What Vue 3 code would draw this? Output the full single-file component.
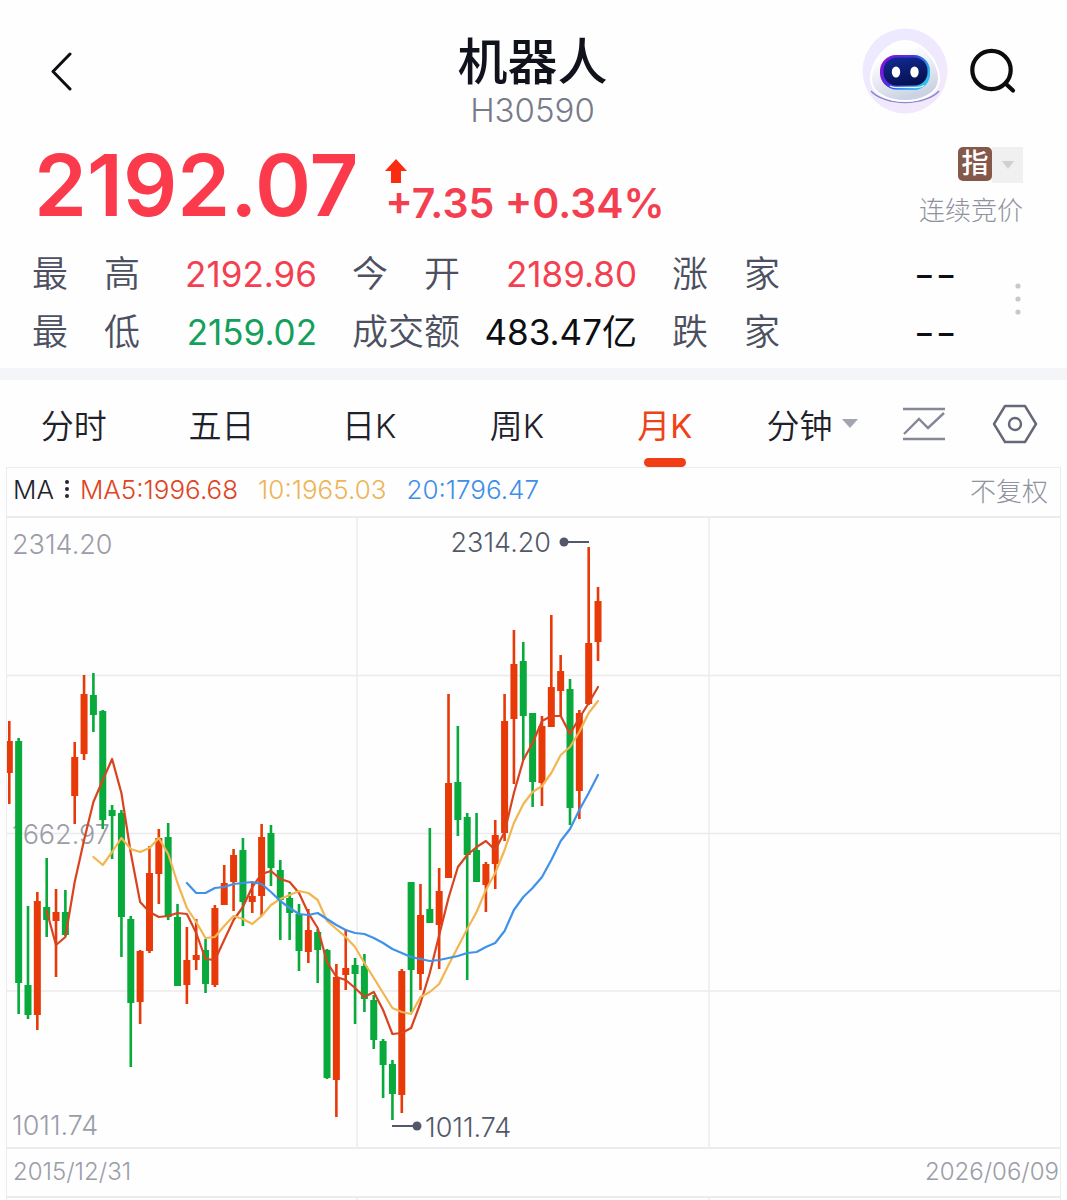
<script setup>
import { ref } from 'vue'

const tabs = ['分时', '五日', '日K', '周K', '月K']
const active = ref('月K')

const quotes = [
  [
    { label: '最高', value: '2192.96', tone: 'up' },
    { label: '今开', value: '2189.80', tone: 'up' },
    { label: '涨家', value: '--', tone: 'none' },
  ],
  [
    { label: '最低', value: '2159.02', tone: 'down' },
    { label: '成交额', value: '483.47亿', tone: 'flat' },
    { label: '跌家', value: '--', tone: 'none' },
  ],
]

// Monthly candles: [rising, high, body top, body bottom, low]
const candles = [
  [1, 721, 741, 773, 804], [0, 738, 741, 983, 1014], [0, 906, 985, 1015, 1019], [1, 892, 901, 1015, 1030],
  [0, 858, 907, 920, 937], [1, 889, 912, 921, 977], [0, 890, 912, 935, 936], [1, 742, 757, 796, 824],
  [1, 675, 694, 754, 760], [0, 673, 695, 715, 732], [0, 710, 711, 820, 829], [0, 805, 810, 816, 859],
  [0, 810, 813, 917, 957], [0, 916, 919, 1003, 1067], [1, 950, 951, 1002, 1024], [1, 846, 873, 951, 953],
  [1, 829, 838, 874, 904], [0, 823, 837, 917, 920], [0, 904, 917, 986, 986], [1, 927, 960, 985, 1004],
  [1, 919, 955, 960, 970], [0, 939, 950, 984, 993], [1, 905, 908, 985, 987], [1, 865, 883, 905, 905],
  [1, 849, 855, 882, 911], [0, 838, 850, 902, 926], [1, 883, 896, 902, 913], [1, 824, 837, 896, 916],
  [0, 825, 833, 868, 886], [0, 860, 870, 900, 940], [0, 892, 898, 913, 940], [0, 904, 914, 951, 971],
  [1, 909, 930, 952, 963], [0, 929, 932, 950, 983], [0, 949, 950, 1078, 1079], [1, 964, 977, 1080, 1117],
  [1, 929, 968, 975, 990], [0, 958, 965, 974, 1024], [0, 954, 966, 999, 1012], [0, 995, 1000, 1040, 1049],
  [0, 1039, 1041, 1065, 1098], [0, 1060, 1064, 1094, 1120], [1, 969, 971, 1095, 1113], [0, 882, 882, 970, 1012],
  [1, 884, 915, 974, 990], [0, 828, 909, 923, 923], [1, 868, 891, 925, 969], [1, 694, 783, 878, 878],
  [0, 726, 782, 820, 836], [0, 813, 817, 855, 980], [0, 813, 850, 882, 882], [1, 862, 864, 885, 912],
  [1, 820, 835, 864, 889], [1, 694, 721, 833, 841], [1, 630, 664, 719, 784], [0, 642, 661, 716, 760],
  [0, 713, 713, 782, 807], [1, 716, 726, 783, 806], [1, 615, 687, 727, 727], [1, 655, 671, 691, 716],
  [0, 679, 689, 808, 825], [1, 710, 713, 791, 819], [1, 547, 643, 704, 705], [1, 587, 601, 642, 661],
]

const averages = [
  { name: 'ma5', start: 4, values: [911, 945, 937, 882, 840, 802, 780, 759, 793, 853, 902, 912, 917, 916, 913, 914, 933, 959, 960, 940, 920, 907, 887, 874, 871, 879, 882, 893, 913, 928, 962, 977, 980, 988, 997, 992, 1010, 1034, 1033, 1028, 1003, 973, 935, 898, 867, 855, 847, 841, 850, 832, 793, 760, 743, 721, 716, 716, 734, 718, 703, 687] },
  { name: 'ma10', start: 9, values: [857, 865, 852, 838, 849, 852, 848, 838, 854, 883, 908, 922, 938, 937, 926, 916, 919, 924, 916, 905, 899, 895, 891, 893, 900, 921, 929, 937, 947, 963, 978, 993, 1008, 1012, 1014, 997, 992, 984, 965, 947, 929, 912, 890, 873, 850, 823, 804, 792, 786, 773, 755, 747, 732, 713, 701] },
  { name: 'ma20', start: 19, values: [883, 893, 893, 888, 887, 884, 883, 882, 884, 892, 901, 908, 914, 915, 913, 919, 925, 930, 933, 934, 938, 943, 949, 953, 957, 959, 961, 960, 958, 956, 953, 952, 947, 943, 931, 910, 897, 888, 877, 860, 841, 829, 810, 793, 775] },
]

const cx = (i) => 9.3 + i * 9.345
const points = (line) => line.values.map((y, i) => `${cx(line.start + i).toFixed(1)},${y}`).join(' ')
</script>

<template>
  <main class="page">
    <header class="top">
      <button class="icon-btn back" aria-label="返回">
        <svg width="26" height="40" viewBox="0 0 26 40"><path d="M23 3 6 20.500 23 38" fill="none" stroke="#0d0e12" stroke-width="3" stroke-linecap="round" stroke-linejoin="round" /></svg>
      </button>
      <div class="heading">
        <h1>机器人</h1>
        <p>H30590</p>
      </div>
      <div class="actions">
        <button class="icon-btn" aria-label="助手">
          <svg width="86" height="86" viewBox="0 0 86 86">
            <defs>
              <linearGradient id="halo" x1="0" y1="0" x2="1" y2="1"><stop offset="0" stop-color="#eceaff" /><stop offset="1" stop-color="#f3e8fc" /></linearGradient>
              <linearGradient id="head" x1="0" y1="0" x2=".4" y2="1"><stop offset=".3" stop-color="#fff" /><stop offset="1" stop-color="#cbd3e3" /></linearGradient>
              <linearGradient id="rim" x1="0" y1=".2" x2="1" y2=".6"><stop offset="0" stop-color="#8a10d8" /><stop offset=".55" stop-color="#3b3fe0" /><stop offset="1" stop-color="#2cc3ef" /></linearGradient>
              <linearGradient id="visor" x1=".2" y1="0" x2=".6" y2="1"><stop offset="0" stop-color="#122a92" /><stop offset="1" stop-color="#06104f" /></linearGradient>
            </defs>
            <circle cx="43" cy="43" r="42.500" fill="url(#halo)" />
            <path d="M9 63C15 70 29 74.500 43 74.500s28-4.500 34-11.500" fill="none" stroke="#8c84cf" stroke-width="1.500" />
            <path d="M43 13c17 0 34 20 34 38 0 15-18 22-34 22S9 66 9 51c0-18 17-38 34-38Z" fill="url(#head)" stroke="#fff" stroke-width="2" />
            <rect x="19" y="28" width="49" height="34" rx="16" fill="#2cb8ee" />
            <rect x="18" y="27" width="50" height="34" rx="16" fill="url(#rim)" />
            <rect x="21.500" y="29.500" width="44" height="28" rx="13" fill="url(#visor)" />
            <path d="M28 58q3 2 8 1.500h18q5 0 8-2" fill="none" stroke="#dff4ff" stroke-width="1.500" />
            <ellipse cx="34" cy="44" rx="4.200" ry="5.500" fill="#fff" />
            <ellipse cx="52.500" cy="44" rx="4.200" ry="5.500" fill="#fff" />
          </svg>
        </button>
        <button class="icon-btn" aria-label="搜索">
          <svg width="50" height="50" viewBox="0 0 50 50" fill="none" stroke="#0b0c0e" stroke-width="4.200" stroke-linecap="round"><circle cx="23.500" cy="24" r="19.200" /><path d="m38 38 7 6.500" /></svg>
        </button>
      </div>
    </header>

    <section class="price">
      <strong class="last">2192.07</strong>
      <div class="change">
        <svg width="22" height="24" viewBox="0 0 22 24"><path d="M11 0 22 12h-6v12H6V12H0Z" fill="#fb2b12" /></svg>
        <span>+7.35 +0.34%</span>
      </div>
      <div class="status">
        <button class="kind" aria-label="指数类型">
          <b>指</b>
          <i><svg width="14" height="8" viewBox="0 0 14 8"><path d="M1 0h12L7 8Z" fill="#cfcfd6" /></svg></i>
        </button>
        <span>连续竞价</span>
      </div>
    </section>

    <section class="quotes">
      <dl>
        <template v-for="(row, r) in quotes" :key="r">
          <div v-for="q in row" :key="q.label">
            <dt><span v-for="c in q.label" :key="c">{{ c }}</span></dt>
            <dd :class="q.tone">{{ q.value }}</dd>
          </div>
        </template>
      </dl>
      <button class="icon-btn more" aria-label="更多">
        <svg width="6" height="34" viewBox="0 0 6 34" fill="#c9c9cc"><circle cx="3" cy="4" r="2.600" /><circle cx="3" cy="17" r="2.600" /><circle cx="3" cy="30" r="2.600" /></svg>
      </button>
    </section>

    <nav class="tabs">
      <button v-for="t in tabs" :key="t" :class="{ on: t === active }" @click="active = t">{{ t }}</button>
      <button class="minutes">分钟<svg width="16" height="9" viewBox="0 0 16 9"><path d="M0 0h16L8 9Z" fill="#a3a6b0" /></svg></button>
      <button aria-label="指标">
        <svg width="44" height="36" viewBox="0 0 44 36" fill="none" stroke="#858896" stroke-width="2.400"><path d="M1 3h42M1 33h42" /><path d="m2 28 15-15 9 9L42 7" /></svg>
      </button>
      <button aria-label="设置">
        <svg width="46" height="40" viewBox="0 0 46 40" fill="none" stroke="#656877" stroke-width="2.400" stroke-linejoin="round"><path d="M13 2h20l11 18-11 18H13L2 20Z" /><circle cx="23" cy="20" r="6" /></svg>
      </button>
    </nav>

    <section class="chart">
      <div class="legend">
        <span class="ma">MA</span>
        <svg width="6" height="20" viewBox="0 0 6 20" fill="#24262e"><circle cx="3" cy="3" r="2" /><circle cx="3" cy="10" r="2" /><circle cx="3" cy="17" r="2" /></svg>
        <span class="m5">MA5:1996.68</span>
        <span class="m10">10:1965.03</span>
        <span class="m20">20:1796.47</span>
        <span class="adjust">不复权</span>
      </div>
      <svg class="plot" viewBox="7 518 1053 629" role="img" aria-label="月K线">
        <path class="grid" d="M7 675.500H1060M7 833.500H1060M7 991H1060M357 518V1148M709 518V1148" />
        <g class="axis">
          <text x="12" y="554">2314.20</text>
          <text x="12" y="844">1662.97</text>
          <text x="12" y="1135">1011.74</text>
        </g>
        <g v-for="(c, i) in candles" :key="i" :class="c[0] ? 'rise' : 'fall'">
          <rect :x="cx(i) - 1.3" :y="c[1]" width="2.6" :height="c[4] - c[1]" />
          <rect :x="cx(i) - 3.5" :y="c[2]" width="7" :height="c[3] - c[2]" />
        </g>
        <polyline v-for="line in averages" :key="line.name" :class="line.name" :points="points(line)" />
        <g class="callout">
          <path d="M564 542h25M392 1126h25" />
          <circle cx="564" cy="542" r="4.500" />
          <circle cx="417" cy="1126" r="4.500" />
          <text x="551" y="552" text-anchor="end">2314.20</text>
          <text x="425" y="1137">1011.74</text>
        </g>
      </svg>
      <div class="dates"><time>2015/12/31</time><time>2026/06/09</time></div>
      <svg class="volume" viewBox="7 1198 1053 3"><path class="grid" d="M357 1198V1201M709 1198V1201" /></svg>
    </section>
  </main>
</template>

<style>
body { margin: 0; background: #fefefe; }
</style>

<style scoped>
.page {
  font-family: Inter, "Noto Sans CJK SC", sans-serif;
  color: #1f222b;
  background: #fefefe;
  overflow: hidden;
}
button { border: 0; padding: 0; margin: 0; background: none; font: inherit; color: inherit; cursor: pointer; }
svg { display: block; }
h1, p, dl, dd { margin: 0; }

.top { display: grid; grid-template-columns: 1fr auto 1fr; align-items: center; height: 142px; padding: 0 49px 0 47px; }
.heading { text-align: center; }
h1 { padding-top: 17px; font-size: 50px; line-height: 60px; font-weight: 500; color: #10131c; }
.heading p { font-size: 33px; line-height: 36px; font-weight: 300; color: #777b89; }
.actions { display: flex; justify-content: flex-end; align-items: center; gap: 20px; }

.price { display: flex; align-items: flex-start; height: 100px; padding: 0 44px 0 34px; }
.last { font-size: 85px; line-height: 88px; font-weight: 600; color: #fb3a4c; }
.change { display: flex; flex-direction: column; margin-left: 27px; padding-top: 17px; color: #f43f51; }
.change span { font-size: 41px; line-height: 40px; font-weight: 600; }
.status { display: flex; flex-direction: column; align-items: flex-end; gap: 10px; margin-left: auto; padding-top: 5px; font-size: 26px; line-height: 36px; font-weight: 300; color: #8f939f; }
.kind { display: flex; height: 36px; }
.kind b { width: 34px; height: 34px; border-radius: 5px; background: #85594a; color: #fff; font-size: 27px; line-height: 34px; font-weight: 500; }
.kind i { display: flex; align-items: center; justify-content: center; width: 31px; background: #f0f0f1; }

.quotes { display: flex; align-items: center; justify-content: space-between; padding: 3px 46px 7px 32px; border-bottom: 12px solid #f4f5f9; }
dl { display: grid; grid-template-columns: 285fr 285fr 285fr; column-gap: 35px; flex: 0 1 925px; }
dl div { display: flex; justify-content: space-between; align-items: center; height: 58px; font-size: 36px; line-height: 58px; }
dt { display: flex; justify-content: space-between; width: 108px; font-weight: 350; color: #4c5060; }
dd { font-size: 35px; font-weight: 400; white-space: nowrap; }
.more { padding-bottom: 8px; }
.up { color: #f43f51; }
.down { color: #14a05c; }
.flat { color: #0d0e12; }
.none { font-size: 48px; font-weight: 300; color: #0d0e12; }

.tabs { display: grid; grid-template-columns: repeat(6, 148fr) 76fr 105fr; height: 87px; font-size: 33px; font-weight: 350; }
.tabs button { position: relative; display: flex; align-items: center; justify-content: center; }
.tabs .on { color: #ee4218; font-weight: 400; }
.tabs .on::after { content: ""; position: absolute; bottom: 0; left: 50%; width: 42px; height: 9px; margin-left: -21px; border-radius: 5px; background: #f03d15; }
.minutes { gap: 10px; }

.chart { margin: 0 6px; border: 1px solid #ececee; border-bottom: 0; }
.legend { display: flex; align-items: center; height: 50px; padding: 0 12px 6px 6px; font-size: 26px; font-weight: 300; box-sizing: border-box; border-bottom: 2px solid #ececee; }
.ma { margin-right: 10px; }
.m5 { margin-left: 10px; color: #dd4524; }
.m10 { margin-left: 20px; color: #edb556; }
.m20 { margin-left: 20px; color: #3f8fe8; }
.adjust { margin-left: auto; color: #8f939f; }
.plot, .volume { width: 100%; height: auto; }
.grid { fill: none; stroke: #ebebed; stroke-width: 1.5; }
text { font-size: 27px; font-weight: 300; }
.axis { fill: #9a9da8; }
.callout { fill: #525868; stroke: none; }
.callout path { stroke: #525868; stroke-width: 2; }
.rise { fill: #e83a08; }
.fall { fill: #07aa3b; }
polyline { fill: none; stroke-width: 2.2; stroke-linejoin: round; stroke-linecap: round; }
.ma5 { stroke: #d9431f; }
.ma10 { stroke: #f3b64f; }
.ma20 { stroke: #3f92ea; }
.dates { display: flex; justify-content: space-between; align-items: center; height: 51px; padding: 0 1px 2px 6px; box-sizing: border-box; border-top: 2px solid #ececee; border-bottom: 2px solid #ececee; font-size: 24px; font-weight: 300; color: #9a9da8; }
</style>
